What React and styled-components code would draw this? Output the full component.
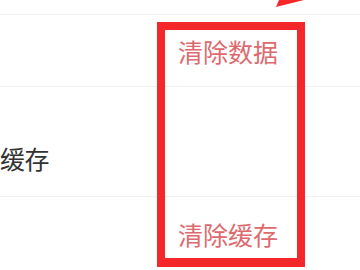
import React from "react";
import styled, { createGlobalStyle } from "styled-components";

const Global = createGlobalStyle`
  html, body { margin: 0; padding: 0; background: #fff; }
  body { font-family: "Noto Sans CJK SC", "Noto Sans", sans-serif; }
`;

const Screen = styled.div`
  position: relative;
  width: 360px;
  height: 270px;
  overflow: hidden;
  background: #ffffff;
`;

const List = styled.div`
  display: flex;
  flex-direction: column;
`;

const Row = styled.div`
  display: flex;
  align-items: flex-start;
  justify-content: ${(p) => (p.$action ? "flex-end" : "flex-start")};
  height: ${(p) => p.$h}px;
  padding-top: ${(p) => p.$pt || 0}px;
  padding-right: ${(p) => (p.$action ? 82 : 0)}px;
  box-sizing: border-box;
  border-bottom: 1px solid #f1f1f1;
`;

const Label = styled.span`
  font-size: 25px;
  line-height: 25px;
  color: #333333;
  letter-spacing: -0.5px;
`;

const Action = styled.span`
  font-size: 25px;
  line-height: 25px;
  color: #dc6a6e;
  letter-spacing: 0px;
`;

const Highlight = styled.div`
  position: absolute;
  left: 157px;
  top: 22px;
  width: 148px;
  height: 245px;
  box-sizing: border-box;
  border: 8px solid #f4282b;
  border-bottom-width: 9px;
  pointer-events: none;
`;

const Arrow = styled.svg`
  position: absolute;
  left: 270px;
  top: 0;
`;

export default function App() {
  return (
    <>
      <Global />
      <Screen>
        <List>
          <Row $h={15} />
          <Row $h={72} $pt={24} $action>
            <Action>清除数据</Action>
          </Row>
          <Row $h={110} $pt={59}>
            <Label>缓存</Label>
          </Row>
          <Row $h={80} $pt={25} $action>
            <Action>清除缓存</Action>
          </Row>
        </List>
        <Highlight />
        <Arrow width="40" height="12" viewBox="0 0 40 12">
          <polygon points="6,7 9,0 34,0" fill="#f4282b" />
        </Arrow>
      </Screen>
    </>
  );
}
